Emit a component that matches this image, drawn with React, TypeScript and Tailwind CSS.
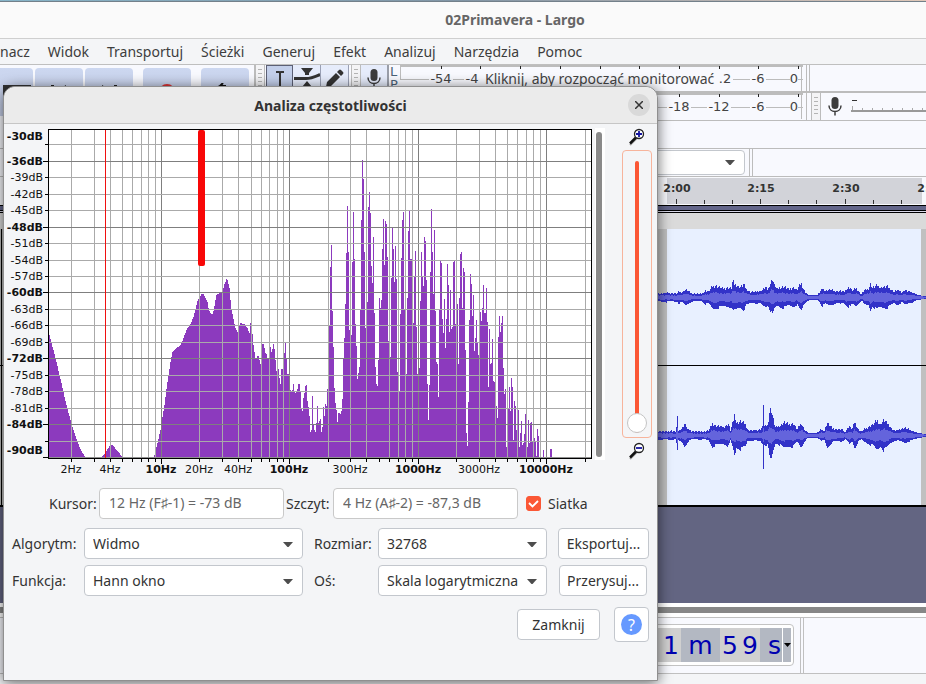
import { useState } from "react";

type Point = [number, number];

const PLOT_LEFT = 49;
const PLOT_RIGHT = 591;
const FLOOR = 458;

// Smooth low end of the spectrum, interpolated between the points
const LOW_HUMPS: Point[][] = [
  [[49, 335], [55, 358], [60, 379], [65, 401], [71, 424], [76, 439], [80, 449], [84, 456]],
  [[102, 456], [106, 451], [109, 446], [112, 445], [118, 452], [121, 456]],
  [
    [154, 455], [157, 443], [161, 425], [162, 417], [164, 405], [166, 389], [168, 375], [170, 362], [172, 352],
    [176, 348], [180, 345], [182, 341], [184, 335], [187, 328], [190, 324], [193, 317], [195, 309], [197, 301],
    [199, 297], [201, 294], [203, 294], [205, 298], [207, 302], [208, 308], [210, 313], [212, 314], [213, 311],
    [215, 300], [216, 295], [219, 293], [222, 291], [224, 284], [226, 279], [227, 280], [229, 288], [230, 300],
    [231, 309], [233, 319], [235, 328], [237, 332], [239, 326], [240, 323], [244, 324], [247, 328], [249, 333],
  ],
];

// Top of every one-pixel column from 250 on
const HIGH_COLUMNS = [
  323, 315, 334, 345, 352, 358, 358, 356, 356, 360, 364, 351, 344, 344, 348, 353, 354, 358, 358, 353,
  347, 352, 349, 344, 349, 360, 371, 371, 369, 378, 384, 369, 369, 359, 353, 343, 358, 374, 374, 367,
  390, 391, 390, 384, 391, 393, 391, 389, 384, 384,
  392, 408, 411, 398, 393, 386, 385, 401, 407, 416, 432, 430, 396, 424, 430, 432, 423, 406, 423, 421,
  419, 432, 427, 407, 416, 404, 406, 389, 389, 325, 267, 245, 311, 347, 388, 403, 410, 422, 413, 413,
  414, 411, 399, 359, 338, 304, 253, 206, 252, 330, 330, 335, 262, 212, 259, 324, 346, 379, 373, 367,
  310, 220, 160, 179, 252, 328, 327, 302, 207, 192, 213, 266, 283, 237, 313, 367, 384, 386, 360, 298,
  308, 300, 249, 219, 265, 221, 224, 257, 341, 341, 357, 278, 228, 249, 282, 246, 279, 372, 391, 391,
  314, 258, 220, 212, 310, 374, 374, 298, 231, 211, 259, 259, 323, 323, 276, 251, 327, 374, 374, 368,
  301, 252, 277, 286, 237, 241, 280, 384, 420, 385, 272, 209, 252, 294, 230, 311, 362, 364, 397, 310,
  261, 263, 319, 333, 299, 348, 319, 264, 285, 332, 290, 329, 327, 262, 261, 324, 325, 304, 364, 298,
  254, 252, 308, 268, 272, 350, 433, 446, 402, 320, 274, 284, 316, 295, 351, 338, 320, 343, 355, 355,
  312, 321, 308, 285, 313, 313, 288, 322, 387, 329, 364, 363, 339, 381, 382, 382, 406, 418, 337, 316,
  332, 323, 316, 368, 394, 389, 447, 408, 408, 387, 411, 378, 387, 440, 401, 406, 430, 408, 410, 447,
  433, 421, 445, 443, 434, 414, 434, 447, 420, 443, 423, 422, 441, 441, 438, 442, 456, 429, 436, 458,
  458, 458, 458, 450, 458, 458, 458, 458, 458, 458, 449, 449, 458,
];

function interpolate(points: Point[], x: number) {
  for (let i = 1; i < points.length; i++) {
    const [x0, y0] = points[i - 1];
    const [x1, y1] = points[i];
    if (x >= x0 && x <= x1) return y0 + ((y1 - y0) * (x - x0)) / (x1 - x0);
  }
  return points[points.length - 1][1];
}

function column(x: number, top: number) {
  return `M${x} ${FLOOR}V${Math.round(top)}h1V${FLOOR}z`;
}

function spectrumPath() {
  const parts: string[] = [];
  LOW_HUMPS.forEach((hump) => {
    for (let x = hump[0][0]; x <= hump[hump.length - 1][0]; x++) {
      parts.push(column(x, interpolate(hump, x)));
    }
  });
  HIGH_COLUMNS.forEach((top, i) => parts.push(column(250 + i, top)));
  return parts.join("");
}

const DB_LINES = [
  { y: 144, label: "" },
  { y: 161, label: "-36dB", major: true },
  { y: 177, label: "-39dB" },
  { y: 194, label: "-42dB" },
  { y: 210, label: "-45dB" },
  { y: 227, label: "-48dB", major: true },
  { y: 243, label: "-51dB" },
  { y: 260, label: "-54dB" },
  { y: 276, label: "-57dB" },
  { y: 292, label: "-60dB", major: true },
  { y: 309, label: "-63dB" },
  { y: 325, label: "-66dB" },
  { y: 342, label: "-69dB" },
  { y: 358, label: "-72dB", major: true },
  { y: 375, label: "-75dB" },
  { y: 391, label: "-78dB" },
  { y: 408, label: "-81dB" },
  { y: 424, label: "-84dB", major: true },
  { y: 441, label: "" },
];

const HZ_MINOR = [
  71, 94, 110, 122, 132, 141, 148, 155, 199, 222, 238, 251, 261, 269, 277, 283, 328, 350, 366, 389, 398, 405, 412,
  456, 479, 495, 507, 517, 526, 533, 540, 585,
];
const HZ_MAJOR = [161, 289, 418, 546];

const HZ_LABELS = [
  { x: 71, label: "2Hz" },
  { x: 110, label: "4Hz" },
  { x: 161, label: "10Hz", major: true },
  { x: 199, label: "20Hz" },
  { x: 238, label: "40Hz" },
  { x: 289, label: "100Hz", major: true },
  { x: 350, label: "300Hz" },
  { x: 418, label: "1000Hz", major: true },
  { x: 479, label: "3000Hz" },
  { x: 546, label: "10000Hz", major: true },
];

function SpectrumPlot({ grid }: { grid: boolean }) {
  return (
    <svg width="587" height="350" viewBox="5 128 587 350" className="shrink-0 font-['DejaVu_Sans'] text-[11px]">
      <g shapeRendering="crispEdges">
        <rect x="48" y="129" width="544" height="330" fill="#000" />
        <rect x={PLOT_LEFT} y="130" width={PLOT_RIGHT - PLOT_LEFT} height="328" fill="#fff" />
        <path d={spectrumPath()} fill="#8c3abe" />
        {grid && (
          <>
            {HZ_MINOR.map((x) => (
              <rect key={x} x={x} y="130" width="1" height="328" fill="#aaaaaa" />
            ))}
            {HZ_MAJOR.map((x) => (
              <rect key={x} x={x} y="130" width="1" height="328" fill="#7f7f7f" />
            ))}
            {DB_LINES.map(({ y, major }) => (
              <rect key={y} x={PLOT_LEFT} y={y} width="542" height="1" fill={major ? "#7f7f7f" : "#aaaaaa"} />
            ))}
            <rect x={PLOT_LEFT} y="457" width="542" height="1" fill="#8f8f8f" />
          </>
        )}
        {[...HZ_MINOR, 379].map((x) => (
          <rect key={x} x={x} y="459" width="1" height="3" fill="#000" />
        ))}
        {HZ_MAJOR.map((x) => (
          <rect key={x} x={x} y="459" width="1" height="5" fill="#000" />
        ))}
        {DB_LINES.map(({ y, major }) => (
          <rect key={y} x={major ? 43 : 45} y={y} width={major ? 5 : 3} height="1" fill="#000" />
        ))}
        <rect x="43" y="457" width="5" height="1" fill="#000" />
        <rect x="105" y="130" width="1" height="328" fill="#f01010" />
      </g>
      <rect x="198" y="130" width="7" height="136" rx="2" fill="#f80707" />
      <g textAnchor="end" fill="#111">
        <text x="43" y="140" className="font-bold">-30dB</text>
        {DB_LINES.filter((line) => line.label).map(({ y, label, major }) => (
          <text key={label} x="43" y={y + 4} className={major ? "font-bold" : ""}>
            {label}
          </text>
        ))}
        <text x="43" y="454" className="font-bold">-90dB</text>
      </g>
      <g textAnchor="middle" fill="#111">
        {HZ_LABELS.map(({ x, label, major }) => (
          <text key={label} x={x} y="473" className={major ? "font-bold" : ""}>
            {label}
          </text>
        ))}
      </g>
    </svg>
  );
}

// Envelopes: position and half height, both at three units to the pixel
const LEFT_CHANNEL: Point[] = [
  [21, 10], [50, 13], [65, 11], [80, 11], [85, 17], [95, 14], [107, 23], [118, 14], [130, 10], [155, 10], [165, 19],
  [175, 17], [185, 32], [195, 34], [205, 30], [220, 25], [235, 28], [243, 28], [247, 48], [252, 40], [260, 34],
  [270, 29], [280, 38], [288, 23], [300, 15], [330, 18], [345, 29], [352, 23], [360, 40], [366, 56], [372, 36],
  [380, 25], [400, 32], [415, 23], [430, 28], [440, 20], [447, 36], [452, 42], [460, 21], [470, 9], [480, 6],
  [500, 6], [508, 14], [515, 26], [525, 19], [540, 23], [555, 17], [570, 19], [580, 15], [590, 26], [600, 28],
  [605, 19], [617, 26], [625, 17], [633, 8], [642, 21], [655, 24], [661, 42], [665, 26], [678, 36], [690, 29],
  [710, 32], [720, 25], [730, 15], [740, 22], [755, 13], [763, 22], [775, 16], [790, 12], [800, 7], [815, 4], [830, 2],
];

const RIGHT_CHANNEL: Point[] = [
  [21, 12], [50, 11], [62, 13], [75, 9], [79, 30], [81, 50], [84, 14], [95, 20], [103, 35], [112, 17], [125, 11],
  [160, 10], [175, 14], [185, 34], [200, 27], [220, 24], [235, 34], [240, 14], [248, 40], [253, 66], [258, 36],
  [272, 42], [285, 32], [292, 15], [310, 14], [330, 17], [336, 24], [339, 98], [342, 26], [352, 30], [357, 68],
  [362, 80], [368, 50], [375, 23], [385, 25], [400, 38], [415, 33], [430, 34], [440, 17], [452, 36], [465, 13],
  [475, 6], [500, 6], [512, 17], [522, 13], [530, 38], [545, 21], [560, 17], [575, 17], [583, 9], [597, 26],
  [605, 17], [613, 40], [622, 19], [632, 11], [645, 20], [658, 26], [668, 32], [680, 44], [690, 32], [700, 46],
  [712, 34], [722, 21], [735, 13], [750, 17], [763, 22], [780, 15], [795, 9], [815, 4], [830, 2],
];

function wavePath(envelope: Point[], center: number, gain: number, seed: number) {
  let d = "";
  for (let i = 0; i < 270; i++) {
    const half = interpolate(envelope, 21 + i * 3) / 3;
    const jitterUp = 0.85 + 0.3 * (((i * 37 + seed) % 11) / 11);
    const jitterDown = 0.8 + 0.3 * (((i * 53 + seed) % 13) / 13);
    const cap = gain < 1 ? 7 : 100;
    const up = Math.round(Math.min(cap, half * gain) * jitterUp);
    const down = Math.round(Math.min(cap, half * gain) * jitterDown);
    d += `M${657 + i} ${center - up}h1v${up + down + 1}h-1z`;
  }
  return d;
}

function Tracks() {
  return (
    <svg width="100%" height="276" viewBox="0 229 926 276" preserveAspectRatio="xMaxYMin slice" className="block shrink-0 bg-[#c0c0c0]" shapeRendering="crispEdges">
      <rect x="0" y="229" width="926" height="276" fill="#c0c0c0" />
      <rect x="667" y="229" width="254" height="276" fill="#e8f0ff" />
      <rect x="1" y="229" width="1" height="276" fill="#000" />
      <path d={wavePath(LEFT_CHANNEL, 297, 1, 3)} fill="#3232c8" />
      <path d={wavePath(LEFT_CHANNEL, 297, 0.42, 5)} fill="#6464dc" />
      <path d={wavePath(RIGHT_CHANNEL, 435, 1, 7)} fill="#3232c8" />
      <path d={wavePath(RIGHT_CHANNEL, 435, 0.42, 2)} fill="#6464dc" />
      <rect x="0" y="365" width="926" height="1" fill="#000" />
    </svg>
  );
}

function Ruler() {
  const labels = [
    { x: 677, label: "2:00" },
    { x: 761, label: "2:15" },
    { x: 846, label: "2:30" },
    { x: 931, label: "2:45" },
  ];
  return (
    <svg width="100%" height="28" viewBox="0 0 926 28" preserveAspectRatio="xMaxYMin slice" className="block shrink-0 font-['DejaVu_Sans'] text-[11px] font-bold">
      <rect width="926" height="28" fill="#f8f9fd" />
      <rect x="667" y="1" width="255" height="26" fill="#d2d3d9" />
      {[676, 704, 732, 760, 788, 816, 845, 873, 901].map((x, i) => (
        <rect key={x} x={x} y={i % 3 === 0 ? 22 : 23} width="1" height={i % 3 === 0 ? 5 : 4} fill="#333" />
      ))}
      {labels.map(({ x, label }) => (
        <text key={label} x={x} y="15" textAnchor="middle" fill="#333">
          {label}
        </text>
      ))}
    </svg>
  );
}

const METER_TICKS = [41, 80, 120, 160, 200, 239, 279, 319, 358, 398];

function MeterScale({ labels }: { labels: { x: number; label: string }[] }) {
  return (
    <svg width="406" height="27" viewBox="0 0 406 27" className="block shrink-0 font-['DejaVu_Sans'] text-[13px]">
      <g shapeRendering="crispEdges" fill="#bcbcbc">
        <rect x="0" y="0" width="403" height="2" />
        <rect x="0" y="14" width="403" height="1" />
        <rect x="0" y="2" width="1" height="12" />
        <rect x="401" y="1" width="1" height="25" />
      </g>
      {METER_TICKS.map((x) => (
        <rect key={x} x={x} y="1" width="1" height="3" fill="#222" />
      ))}
      {labels.map(({ x, label }) => {
        const width = label.length * 8;
        return (
          <g key={x}>
            <rect x={x - width / 2} y="7" width={width} height="14" fill="#f8f9fe" />
            <text x={x} y="18" textAnchor="middle" fill="#444">
              {label}
            </text>
          </g>
        );
      })}
    </svg>
  );
}

function Grip() {
  return (
    <div className="flex h-[27px] w-[10px] shrink-0 flex-col items-center gap-[3px] border-x border-[#bcbcbc] bg-[#f4f4f6] pt-1">
      {[0, 1, 2, 3, 4].map((i) => (
        <span key={i} className="h-px w-1 bg-[#b4b4b4]" />
      ))}
    </div>
  );
}

function MicIcon() {
  return (
    <svg width="16" height="21" viewBox="0 0 16 21" aria-hidden="true">
      <rect x="4.500" y="1" width="7" height="12" rx="3.500" fill="#3c3c3c" />
      <path d="M2 9.500c0 8 12 8 12 0M8 15.500v4" fill="none" stroke="#3c3c3c" strokeWidth="1.500" />
    </svg>
  );
}

function ToolButton({ label, active, children }: { label: string; active?: boolean; children: React.ReactNode }) {
  return (
    <button
      type="button"
      aria-label={label}
      className={
        active
          ? "flex h-[27px] w-[27px] shrink-0 items-start justify-center border border-[#5c6075] bg-[#c3cfea] pt-1"
          : "flex h-[27px] w-[28px] shrink-0 items-start justify-center border-r border-[#9aa0b4] bg-[#e6ecfb] pt-[3px]"
      }
    >
      {children}
    </button>
  );
}

function TransportButton({ label, wide, children }: { label: string; wide?: boolean; children: React.ReactNode }) {
  return (
    <button
      type="button"
      aria-label={label}
      className={`flex h-12 items-center justify-center rounded bg-gradient-to-b from-[#ccd7f0] to-[#c4cde6] ${wide ? "w-[33px] rounded-l-none" : "w-12"}`}
    >
      {children}
    </button>
  );
}

function Toolbars() {
  return (
    <div className="flex h-[56px] shrink-0 bg-[#f8f9fe]">
      <div className="flex w-[254px] shrink-0 items-start pt-[3px]">
        <div className="flex gap-0.5">
          <TransportButton label="Zatrzymaj" wide>
            <span className="h-[14px] w-[28px] bg-[#333]" />
          </TransportButton>
          <TransportButton label="Na początek">
            <svg width="16" height="14" viewBox="0 0 16 14" aria-hidden="true">
              <path d="M0 0h3v14H0zM15 0v14L4 7z" fill="#222" />
            </svg>
          </TransportButton>
          <TransportButton label="Na koniec">
            <svg width="16" height="14" viewBox="0 0 16 14" aria-hidden="true">
              <path d="M13 0h3v14h-3zM1 0v14l11-7z" fill="#222" />
            </svg>
          </TransportButton>
        </div>
        <div className="flex gap-[10px] pl-[10px]">
          <TransportButton label="Nagraj">
            <span className="h-4 w-4 rounded-full bg-[#d33]" />
          </TransportButton>
          <TransportButton label="Pętla">
            <svg width="18" height="18" viewBox="0 0 18 18" aria-hidden="true">
              <path d="M2 12V6q0-3 3-3h5M7 0L4 3l3 3M16 6v6q0 3-3 3H8" fill="none" stroke="#111" strokeWidth="2" />
            </svg>
          </TransportButton>
        </div>
      </div>
      <div className="w-px bg-[#bcbcbc]" />
      <div className="min-w-0 flex-1">
        <div className="flex h-7 border-b-2 border-[#bcbcbc]">
          <Grip />
          <div className="flex w-[86px] shrink-0 pl-px">
            <ToolButton label="Zaznaczanie" active>
              <svg width="14" height="20" viewBox="0 0 14 20" aria-hidden="true">
                <path d="M3 2h3l1 .5 1-.5h3M7 2v16M3 18h8" fill="none" stroke="#333" strokeWidth="2" />
              </svg>
            </ToolButton>
            <ToolButton label="Obwiednia">
              <svg width="26" height="20" viewBox="0 0 26 20" className="shrink-0" aria-hidden="true">
                <path d="M7 0h12l-4 5v2h-4V5zM8 19h10l-5-6z" fill="#333" />
                <path d="M0 10.500h12c5 0 7-1 14-4" fill="none" stroke="#333" strokeWidth="3" />
              </svg>
            </ToolButton>
            <ToolButton label="Rysowanie">
              <svg width="20" height="20" viewBox="0 0 20 20" aria-hidden="true">
                <path d="M1 19l1-5 9-9 4 4-9 9zM12 4l2-2q1-1 2 0l2 2q1 1 0 2l-2 2z" fill="#333" />
              </svg>
            </ToolButton>
          </div>
          <Grip />
          <div className="flex w-[28px] shrink-0 items-start justify-center border-r-2 border-[#9a9ea9] bg-[#e6ecfb] pt-[3px]">
            <MicIcon />
          </div>
          <div className="w-[11px] shrink-0 pl-px font-['DejaVu_Sans'] text-[13px] leading-[13px] text-[#4a6378]">
            <div>L</div>
            <div>P</div>
          </div>
          <div className="relative">
            <MeterScale
              labels={[
                { x: 41, label: "-54" },
                { x: 72, label: "-4" },
                { x: 325, label: ".2" },
                { x: 358, label: "-6" },
                { x: 394, label: "0" },
              ]}
            />
            <span className="absolute top-[5px] left-[80px] w-[238px] bg-[#f8f9fe] pl-[5px] text-sm leading-[18px] whitespace-nowrap text-[#444]">
              Kliknij, aby rozpocząć monitorować
            </span>
          </div>
          <div className="w-1 border-x border-[#bcbcbc]" />
        </div>
        <div className="flex h-7 border-b border-[#bcbcbc]">
          <div className="w-[145px] shrink-0" />
          <MeterScale
            labels={[
              { x: 279, label: "-18" },
              { x: 319, label: "-12" },
              { x: 358, label: "-6" },
              { x: 394, label: "0" },
            ]}
          />
          <div className="mr-px w-1 shrink-0 border-l border-[#bcbcbc]" />
          <Grip />
          <div className="flex items-start gap-2 pt-[3px] pl-[6px]">
            <MicIcon />
            <svg width="90" height="20" viewBox="0 0 90 20" shapeRendering="crispEdges" aria-hidden="true">
              <rect x="1" y="4" width="5" height="1" fill="#333" />
              <rect x="0" y="14" width="90" height="2" fill="#999" />
              {[1, 11, 21, 31, 41, 51, 61, 71].map((x) => (
                <rect key={x} x={x} y={x === 1 ? 10 : 12} width="1" height={x === 1 ? 4 : 2} fill="#aaa" />
              ))}
            </svg>
          </div>
        </div>
      </div>
    </div>
  );
}

function AudacityWindow() {
  return (
    <div className="flex h-screen flex-col bg-[#f4f5f7]">
      <div className="h-0.5 shrink-0 border-b border-[#73808a] bg-gradient-to-r from-[#86b4c8] via-[#8195a5] to-[#e0c8b8]" />
      <header className="flex h-[37px] shrink-0 items-center justify-center border-b border-[#cfcfcf] bg-[#fafafa] pl-[104px] text-sm font-bold text-[#666]">
        02Primavera - Largo
      </header>
      <nav className="flex h-[26px] shrink-0 items-center gap-[18px] border-b border-[#bfbfbf] text-sm text-[#3d3d3d]">
        {["nacz", "Widok", "Transportuj", "Ścieżki", "Generuj", "Efekt", "Analizuj", "Narzędzia", "Pomoc"].map((item) => (
          <button key={item} type="button">
            {item}
          </button>
        ))}
      </nav>
      <Toolbars />
      <div className="h-7 shrink-0 border-b border-[#bcbcbc] bg-[#f8f9fe]" />
      <div className="flex h-7 shrink-0 border-b border-[#bcbcbc] bg-[#f8f9fe]">
        <div className="flex w-[750px] items-start justify-end border-r border-[#bcbcbc] pr-1">
          <button
            type="button"
            aria-label="Urządzenie"
            className="mt-px flex h-[25px] w-[240px] items-center justify-end rounded border border-[#c3c7cd] bg-white pr-[9px]"
          >
            <Caret />
          </button>
        </div>
        <div className="w-[3px] border-r border-[#bcbcbc]" />
      </div>
      <Ruler />
      <div className="h-[6px] shrink-0 border-y border-black bg-[#63668a]" />
      <div className="h-0.5 shrink-0 border-b border-black bg-[#d8d8e8]" />
      <div className="h-4 shrink-0 bg-[#dadada]" />
      <Tracks />
      <div className="min-h-0 flex-1 border-t-2 border-black bg-[#636582]" />
      <div className="h-[14px] shrink-0 border-y-4 border-white bg-[#878787]" />
      <footer className="flex h-[57px] shrink-0 border-y border-[#c0c0c0] bg-[#f8f9fe]">
        <div className="flex w-[801px] items-start justify-end border-r border-[#c0c0c0] pt-[6px] pr-[6px]">
          <div className="flex h-[42px] rounded border border-[#c3c3c3] bg-white px-0.5 py-[3px] font-['DejaVu_Sans'] text-[25px] leading-[36px] text-[#0000b0]">
            <span className="bg-[#d0d0d0] pr-[2px] pl-[6px]">0 1</span>
            <span className="w-[39px] bg-[#b3b8c2] text-center">m</span>
            <span className="flex w-10 justify-around bg-[#d0d0d0]">
              <span>5</span>
              <span>9</span>
            </span>
            <span className="w-[22px] bg-[#b3b8c2] pr-px text-right">s</span>
            <span className="ml-px flex w-2 items-center justify-center bg-[#b3b8c2]">
              <svg width="7" height="4" viewBox="0 0 7 4" aria-hidden="true">
                <path d="M0 0h7l-3.500 4z" fill="#000" />
              </svg>
            </span>
          </div>
        </div>
        <div className="w-[3px] border-r border-[#c0c0c0]" />
      </footer>
      <div className="h-[10px] shrink-0" />
    </div>
  );
}

function Caret() {
  return (
    <svg width="10" height="5" viewBox="0 0 10 5" aria-hidden="true">
      <path d="M0 0h10l-4 4.500q-1 1-2 0z" fill="#4d4d4d" />
    </svg>
  );
}

function SelectBox({ id, options, className }: { id: string; options: string[]; className: string }) {
  return (
    <div className={`relative ${className}`}>
      <select
        id={id}
        className="h-[31px] w-full appearance-none rounded border border-[#c3c7cd] bg-white pl-2 text-sm text-[#333]"
      >
        {options.map((option) => (
          <option key={option}>{option}</option>
        ))}
      </select>
      <span className="pointer-events-none absolute top-[14px] right-[10px]">
        <Caret />
      </span>
    </div>
  );
}

function ZoomIcon({ plus }: { plus?: boolean }) {
  return (
    <svg width="18" height="18" viewBox="0 0 18 18" aria-hidden="true">
      <path d="M2 17l7-7" stroke="#aaa" strokeWidth="2" />
      <path d="M2 15.500l6-6" stroke="#111" strokeWidth="2.500" />
      <circle cx="11" cy="6" r="4.500" fill="#fff" stroke="#222" strokeWidth="1.300" />
      <path d={plus ? "M8 6h6M11 3v6" : "M8 6h6"} stroke="#1414a0" strokeWidth="1.800" />
    </svg>
  );
}

const buttonClass = "h-[31px] rounded border border-[#c3c7cd] bg-white text-sm text-[#333]";
const fieldClass = "h-[31px] w-[185px] rounded border border-[#c9c9c9] bg-white px-[9px] pb-0.5 text-sm text-[#666]";

function FrequencyDialog() {
  const [grid, setGrid] = useState(true);

  return (
    <section
      role="dialog"
      aria-labelledby="dialog-title"
      className="absolute top-[86px] left-[3px] w-[655px] rounded-t-xl border border-[#8f8f8f] bg-[#f4f5f7] text-sm text-[#333] shadow-[0_2px_14px_rgba(0,0,0,0.6)]"
    >
      <header className="relative flex h-[37px] items-center justify-center rounded-t-xl border-b border-[#c6c6c6] bg-[#ebebeb]">
        <h1 id="dialog-title" className="pt-0.5 font-bold text-[#333]">
          Analiza częstotliwości
        </h1>
        <button
          type="button"
          aria-label="Zamknij okno"
          className="absolute right-[7px] flex h-[22px] w-[22px] items-center justify-center rounded-full bg-[#d9d9d9]"
        >
          <svg width="8" height="8" viewBox="0 0 8 8" aria-hidden="true">
            <path d="M0 0l8 8M8 0L0 8" stroke="#333" strokeWidth="1.500" />
          </svg>
        </button>
      </header>

      {/* Plot, pan bar and zoom slider */}
      <div className="flex pt-1 pl-px">
        <SpectrumPlot grid={grid} />
        <div className="ml-[3px] flex h-[332px] w-[10px] bg-white pt-1 pb-[3px] pl-px">
          <div className="w-[6px] rounded-full bg-[#8a8a8a]" />
        </div>
        <div className="ml-[17px] flex w-[30px] flex-col items-center">
          <ZoomIcon plus />
          <div className="mt-1 mb-1 flex h-[288px] w-[30px] justify-center rounded-sm border border-[#f7b49c] pt-[10px] pb-1">
            <input
              type="range"
              aria-label="Powiększenie"
              defaultValue={100}
              className="h-full w-5 appearance-none bg-transparent [writing-mode:vertical-lr] [&::-webkit-slider-runnable-track]:w-1 [&::-webkit-slider-runnable-track]:rounded-full [&::-webkit-slider-runnable-track]:bg-[#fb5735] [&::-webkit-slider-thumb]:-ml-2 [&::-webkit-slider-thumb]:h-5 [&::-webkit-slider-thumb]:w-5 [&::-webkit-slider-thumb]:appearance-none [&::-webkit-slider-thumb]:rounded-full [&::-webkit-slider-thumb]:border [&::-webkit-slider-thumb]:border-[#c4c4c4] [&::-webkit-slider-thumb]:bg-white"
            />
          </div>
          <ZoomIcon />
        </div>
      </div>

      {/* Readouts */}
      <div className="flex items-center pt-[10px] pl-[45px]">
        <label htmlFor="cursor" className="w-[50px]">Kursor:</label>
        <input id="cursor" readOnly value="12 Hz (F♯-1) = -73 dB" className={fieldClass} />
        <label htmlFor="peak" className="w-[49px] pl-0.5">Szczyt:</label>
        <input id="peak" readOnly value="4 Hz (A♯-2) = -87,3 dB" className={fieldClass} />
        <label className="flex items-center gap-[7px] pl-2">
          <span className="relative flex">
            <input
              type="checkbox"
              checked={grid}
              onChange={(e) => setGrid(e.target.checked)}
              className="h-[15px] w-[15px] appearance-none rounded-[3px] border border-[#c3c7cd] bg-white checked:border-[#fb5735] checked:bg-[#fb5735]"
            />
            {grid && (
              <svg width="15" height="15" viewBox="0 0 15 15" className="pointer-events-none absolute" aria-hidden="true">
                <path d="M3 7l3.500 3.500L12 5" fill="none" stroke="#fff" strokeWidth="1.800" />
              </svg>
            )}
          </span>
          Siatka
        </label>
      </div>

      {/* Settings */}
      <div className="grid grid-cols-[72px_219px_75px_169px_1fr] items-center gap-y-[6px] pt-[9px] pr-2 pl-2">
        <label htmlFor="algorithm">Algorytm:</label>
        <SelectBox id="algorithm" className="w-full" options={["Widmo", "Autokorelacja", "Cepstrum"]} />
        <label htmlFor="size" className="pl-[11px]">Rozmiar:</label>
        <SelectBox id="size" className="w-full" options={["32768", "65536", "16384"]} />
        <button type="button" className={`${buttonClass} ml-[11px] w-[91px]`}>Eksportuj...</button>
        <label htmlFor="window">Funkcja:</label>
        <SelectBox id="window" className="w-full" options={["Hann okno", "Hamming okno"]} />
        <label htmlFor="axis" className="pl-[11px]">Oś:</label>
        <SelectBox id="axis" className="w-full" options={["Skala logarytmiczna", "Skala liniowa"]} />
        <button type="button" className={`${buttonClass} ml-3 w-[88px]`}>Przerysuj...</button>
      </div>

      <div className="flex items-center justify-end gap-[14px] pt-[11px] pr-2 pb-[38px]">
        <button type="button" className={`${buttonClass} w-[83px]`}>Zamknij</button>
        <button
          type="button"
          aria-label="Pomoc"
          className="flex h-[35px] w-[35px] items-center justify-center rounded border border-[#c3c7cd] bg-white"
        >
          <span className="flex h-[21px] w-[21px] items-center justify-center rounded-full bg-[#6699ff] text-base leading-none text-white">
            ?
          </span>
        </button>
      </div>
    </section>
  );
}

export default function App() {
  return (
    <main className="relative min-h-screen overflow-hidden font-['Noto_Sans',sans-serif]">
      <AudacityWindow />
      <FrequencyDialog />
    </main>
  );
}
